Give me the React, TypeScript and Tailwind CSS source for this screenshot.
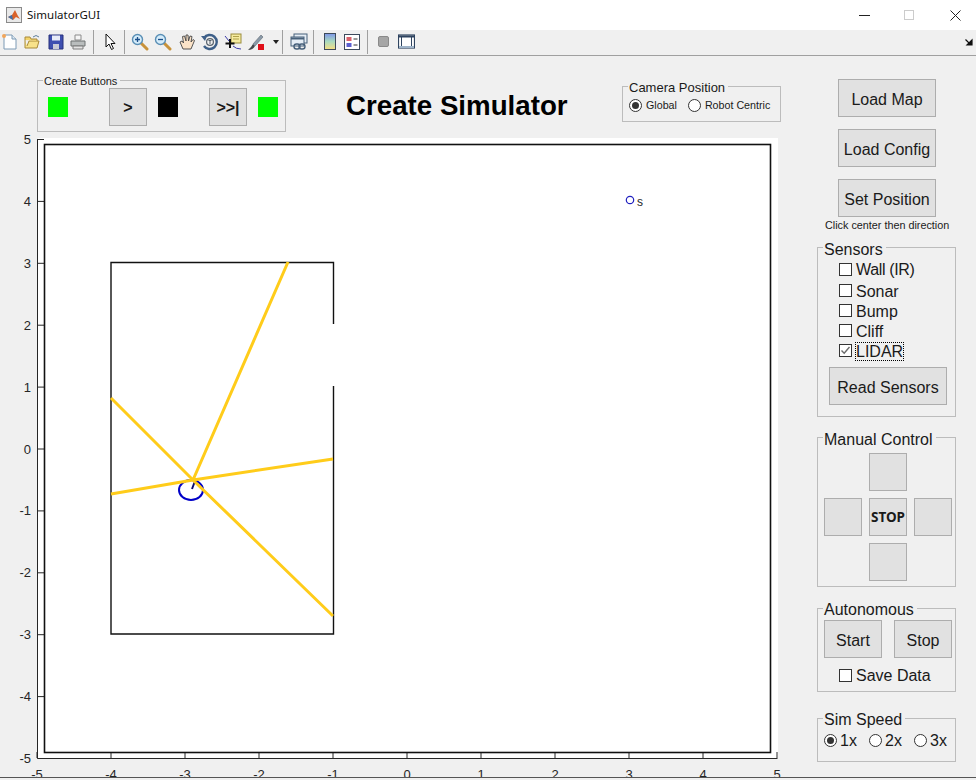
import React from "react";

const Btn = ({ className = "", size = "text-[16px]", children }: { className?: string; size?: string; children?: React.ReactNode }) => (
  <div className={`flex items-center justify-center bg-[#e1e1e1] border border-[#adadad] text-[#1a1a1a] ${size} ${className}`}>{children}</div>
);

const Panel = ({ title, titleClass = "text-[16px]", className = "", children }: { title: string; titleClass?: string; className?: string; children?: React.ReactNode }) => (
  <div className={`relative border border-[#bcbcbc] ${className}`}>
    <span className={`absolute left-[5px] bg-[#f0f0f0] pl-[1px] pr-[3px] leading-none text-[#1a1a1a] ${titleClass}`}>{title}</span>
    {children}
  </div>
);

const Check = ({ label, checked = false, focus = false, rowClass = "h-[20px]", textClass = "mt-[2px]" }: { label: string; checked?: boolean; focus?: boolean; rowClass?: string; textClass?: string }) => (
  <div className={`flex items-center text-[16px] text-[#1a1a1a] ${rowClass}`}>
    <div className="flex h-[13px] w-[13px] items-center justify-center border border-[#333333] bg-white">
      {checked && (
        <svg width="11" height="11" viewBox="0 0 11 11">
          <path d="M1.5 5.5 L4.2 8.2 L9.5 2" fill="none" stroke="#6b6b6b" strokeWidth="1.4" />
        </svg>
      )}
    </div>
    <span className={`ml-[3px] leading-[17px] ${textClass} ${focus ? "border border-dotted border-black" : "border border-transparent"}`}>{label}</span>
  </div>
);

const Radio = ({ on = false }: { on?: boolean }) => (
  <div className="flex h-[13px] w-[13px] shrink-0 items-center justify-center rounded-full border border-[#333333] bg-white">
    {on && <div className="h-[7px] w-[7px] rounded-full bg-[#333333]" />}
  </div>
);

const Sep = ({ ml }: { ml: string }) => <div className={`h-[24px] w-[1px] bg-[#a0a0a0] ${ml}`} />;

const I = ({ w = 18, ml, children }: { w?: number; ml: string; children: React.ReactNode }) => (
  <svg width={w} height="18" viewBox={`0 0 ${w} 18`} className={`shrink-0 ${ml}`}>{children}</svg>
);

const Lens = ({ sign }: { sign: "+" | "-" }) => (
  <>
    <path d="M10 10 L16 16" stroke="#c8923a" strokeWidth="3" strokeLinecap="round" />
    <circle cx="6.5" cy="6.5" r="5" fill="#d5ecfa" stroke="#5a8fb5" strokeWidth="1.4" />
    <path d={sign === "+" ? "M4 6.5 H9 M6.5 4 V9" : "M4 6.5 H9"} stroke="#1c4f8a" strokeWidth="1.3" />
  </>
);

const Toolbar = () => (
  <div className="flex h-[25px] items-center bg-[#f0f0f0] pb-[2px]">
    <I w={16} ml="ml-[1px]">
      <path d="M3 2 H11 L15 6 V16 H3 Z" fill="#ffffff" stroke="#7d9ab5" />
      <path d="M11 2 V6 H15" fill="#dfe9f2" stroke="#7d9ab5" />
      <circle cx="3" cy="3" r="2" fill="#f2a65a" />
    </I>
    <I w={16} ml="ml-[7px]">
      <path d="M1 7 V15 H13 L15 8 H5 L3 13" fill="#f8e28a" stroke="#a88a3a" />
      <path d="M1 7 V4 H6 L7 6 H13 V8" fill="#f3d36a" stroke="#a88a3a" />
      <path d="M9 4 Q12 1 15 4" fill="none" stroke="#5f7f9e" />
    </I>
    <I w={16} ml="ml-[8px]">
      <path d="M1 2 H15 V16 H1 Z" fill="#3e4fb0" stroke="#27307a" />
      <rect x="4" y="2.5" width="8" height="5" fill="#e8ecf8" />
      <rect x="5" y="11" width="6" height="5" fill="#c9cbd6" />
    </I>
    <I w={16} ml="ml-[6px]">
      <path d="M5 2 H11 V7 H5 Z" fill="#f5f5f5" stroke="#8b8b8b" />
      <path d="M1 8 H15 V13 H1 Z" fill="#b9bdbd" stroke="#6f7373" />
      <path d="M3 13 H13 V16 H3 Z" fill="#e3e3e3" stroke="#7d7d7d" />
    </I>
    <Sep ml="ml-[7px]" />
    <I w={14} ml="ml-[10px]">
      <path d="M2 1 V14 L5 11 L7.5 16.5 L9.5 15.5 L7 10.5 H11 Z" fill="#ffffff" stroke="#111111" strokeWidth="1" />
    </I>
    <Sep ml="ml-[6px]" />
    <I ml="ml-[6px]"><Lens sign="+" /></I>
    <I ml="ml-[5px]"><Lens sign="-" /></I>
    <I ml="ml-[6px]">
      <path d="M5 16 L2 9 L4 8 L5.5 10 L4.5 3.5 L6.5 3 L8 8 L8 2 L10 2 L10.5 8 L12 3 L14 3.5 L13 9 L15 6.5 L16.5 7.5 L13 16 Z" fill="#fbe3c8" stroke="#444444" strokeWidth="0.9" />
    </I>
    <I w={17} ml="ml-[5px]">
      <path d="M3 5 A7 7 0 1 1 3 13" fill="none" stroke="#3d5f88" strokeWidth="2.4" />
      <path d="M0 3 L6 3 L4 8 Z" fill="#3d5f88" />
      <circle cx="9" cy="9" r="3.4" fill="none" stroke="#55606b" strokeWidth="1.2" />
      <path d="M7.5 7.5 H10.5 M9 7.5 V11" stroke="#55606b" />
    </I>
    <I ml="ml-[6px]">
      <rect x="7" y="1" width="10" height="9" fill="#f5eb9f" stroke="#9a8c3c" />
      <path d="M9 3.5 H15 M9 6 H15" stroke="#b0a24c" />
      <path d="M6 6 V15 M1.5 10.5 H10.5" stroke="#111111" strokeWidth="2" />
      <path d="M1 3 L5 8 M9 13 Q12 16 17 16" fill="none" stroke="#3a3aa8" />
    </I>
    <I ml="ml-[5px]">
      <path d="M4 14 Q2 16 1 17 Q6 17 8 13 L6 11 Z" fill="#45494d" />
      <path d="M6 11 L14 2 L16 4 L8 13 Z" fill="#8b9aa8" stroke="#5b6670" strokeWidth="0.6" />
      <rect x="11" y="11" width="6" height="6" fill="#e0101a" />
    </I>
    <svg width="6" height="4" viewBox="0 0 6 4" className="ml-[8px] shrink-0"><path d="M0 0 H6 L3 4 Z" fill="#222222" /></svg>
    <Sep ml="ml-[3px]" />
    <I ml="ml-[7px]">
      <rect x="4" y="1" width="13" height="9" fill="#e5edf5" stroke="#47607a" />
      <rect x="1" y="4" width="13" height="9" fill="#e5edf5" stroke="#47607a" />
      <path d="M1 5.5 H14" stroke="#47607a" strokeWidth="2" />
      <rect x="4" y="11" width="6" height="5" rx="2.5" fill="none" stroke="#47607a" strokeWidth="1.4" />
      <rect x="9" y="11" width="6" height="5" rx="2.5" fill="none" stroke="#47607a" strokeWidth="1.4" />
    </I>
    <Sep ml="ml-[5px]" />
    <svg width="12" height="18" viewBox="0 0 12 18" className="ml-[10px] shrink-0">
      <defs>
        <linearGradient id="cb" x1="0" y1="0" x2="0" y2="1">
          <stop offset="0" stopColor="#7d95e8" />
          <stop offset="0.5" stopColor="#a9dbc0" />
          <stop offset="1" stopColor="#f7df82" />
        </linearGradient>
      </defs>
      <rect x="0.5" y="0.5" width="11" height="16" fill="url(#cb)" stroke="#3d4a5c" />
    </svg>
    <I w={16} ml="ml-[8px]">
      <rect x="0.5" y="1.5" width="15" height="15" fill="#ffffff" stroke="#3d4a5c" />
      <rect x="2.5" y="4" width="5" height="4" fill="#d9606a" />
      <rect x="2.5" y="10" width="5" height="4" fill="#5b5fd0" />
      <path d="M9.5 6 H13.5 M9.5 12 H13.5" stroke="#333333" />
    </I>
    <Sep ml="ml-[7px]" />
    <div className="ml-[10px] h-[11px] w-[11px] shrink-0 rounded-[2px] border border-[#8a8a8a] bg-[#a6a6a6]" />
    <I w={17} ml="ml-[9px]">
      <rect x="0.5" y="2" width="16" height="13" fill="#ffffff" stroke="#2f4460" strokeWidth="1.2" />
      <rect x="1" y="2.5" width="15" height="2" fill="#2f4460" />
      <rect x="1" y="13" width="15" height="2" fill="#9fb4c9" />
      <path d="M3.5 4 V13 M13.5 4 V13" stroke="#2f4460" />
    </I>
    <svg width="8" height="8" viewBox="0 0 8 8" className="ml-[550px] shrink-0">
      <path d="M0.5 1.5 L5 6 M7 2 V7 H2 Z" stroke="#111111" strokeWidth="1.2" fill="#111111" />
    </svg>
  </div>
);

const xTicks = [-5, -4, -3, -2, -1, 0, 1, 2, 3, 4, 5];
const xAt = (v: number) => 407 + 74 * v;
const yAt = (v: number) => 449 - 61.9 * v;

const Plot = () => (
  <svg width="800" height="645" viewBox="0 132 800 645" className="block shrink-0">
    <rect x="38" y="138" width="740" height="620" fill="#ffffff" />
    <path d="M37.5 139 V758.5 H777.5" fill="none" stroke="#262626" strokeWidth="1" />
    {xTicks.map((v) => (
      <g key={v}>
        <path d={`M${xAt(v)} 758 V752`} stroke="#262626" />
        <text x={xAt(v)} y="779" textAnchor="middle" fontSize="13" fill="#262626">{v}</text>
        <path d={`M37.5 ${yAt(v)} H44`} stroke="#262626" />
        <text x="31" y={yAt(v) + 4.5} textAnchor="end" fontSize="13" fill="#262626">{v}</text>
      </g>
    ))}
    <rect x="44.5" y="144.5" width="726" height="608" fill="none" stroke="#111111" strokeWidth="1.6" />
    <path d="M333.5 324 V262.5 H111 V634 H333.5 V386" fill="none" stroke="#111111" strokeWidth="1.4" />
    <ellipse cx="191" cy="490" rx="12" ry="10" fill="none" stroke="#0000c8" strokeWidth="2" />
    <path d="M192 489 L195 481" stroke="#0a0a6a" strokeWidth="2" />
    <path d="M193 480 L288 262 M193 480 L111 398 M193 480 L111 494 M193 480 L333 459 M193 480 L333 616" fill="none" stroke="#ffcc1a" strokeWidth="3" />
    <circle cx="630" cy="200" r="3.7" fill="none" stroke="#2020c0" strokeWidth="1.2" />
    <text x="637" y="206" fontSize="12" fill="#262626">s</text>
  </svg>
);

export default function App() {
  return (
    <div className="flex h-[780px] w-[976px] flex-col overflow-hidden bg-[#f0f0f0] font-['Liberation_Sans',Arial,sans-serif]">
      <div className="flex h-[30px] shrink-0 items-center bg-white">
        <svg width="16" height="16" viewBox="0 0 16 16" className="ml-[6px]">
          <rect x="0.5" y="0.5" width="15" height="15" fill="#e9e9e9" stroke="#8a8a8a" />
          <path d="M2 10 L6 8 L9 3 L12 9 L14 12 L10 10 L7 13 Z" fill="#d9622a" />
          <path d="M2 10 L6 8 L7 13 Z" fill="#3f6fa8" />
        </svg>
        <span className="ml-[5px] font-['Noto_Sans',sans-serif] text-[11.5px] text-[#111111]">SimulatorGUI</span>
        <div className="ml-auto flex items-center">
          <div className="h-[1px] w-[11px] bg-[#222222]" />
          <div className="ml-[34px] h-[10px] w-[10px] border border-[#cccccc]" />
          <svg width="11" height="11" viewBox="0 0 11 11" className="ml-[36px] mr-[15px]">
            <path d="M0.5 0.5 L10.5 10.5 M10.5 0.5 L0.5 10.5" stroke="#222222" strokeWidth="1" />
          </svg>
        </div>
      </div>
      <Toolbar />
      <div className="h-[1px] shrink-0 bg-[#a0a0a0]" />
      <div className="flex h-[721px] shrink-0">
        <div className="flex w-[800px] flex-col">
          <div className="ml-[37px] mt-[24px] flex h-[52px] shrink-0 items-start">
            <Panel title="Create Buttons" titleClass="text-[11px] top-[-5px]" className="flex h-[52px] w-[249px] items-center pt-[2px]">
              <div className="ml-[10px] h-[20px] w-[20px] bg-[#00ff00]" />
              <Btn className="ml-[41px] h-[38px] w-[38px] pt-[2px] font-bold">&gt;</Btn>
              <div className="ml-[11px] h-[20px] w-[20px] bg-black" />
              <Btn className="ml-[31px] h-[38px] w-[38px] pt-[2px] font-bold">&gt;&gt;|</Btn>
              <div className="ml-[11px] h-[20px] w-[20px] bg-[#00ff00]" />
            </Panel>
            <div className="ml-[60px] mt-[9px] w-[222px] whitespace-nowrap text-[27.7px] font-bold leading-[34px] text-black">Create Simulator</div>
            <Panel title="Camera Position" titleClass="text-[13px] top-[-6px]" className="ml-[54px] mt-[6px] flex h-[36px] w-[159px] items-center pl-[6px] pt-[3px] text-[10.7px] text-[#1a1a1a]">
              <Radio on />
              <span className="ml-[4px]">Global</span>
              <div className="ml-[11px]"><Radio /></div>
              <span className="ml-[4px]">Robot Centric</span>
            </Panel>
          </div>
          <Plot />
        </div>
        <div className="flex w-[176px] flex-col">
          <Btn className="ml-[38px] mt-[23px] h-[38px] w-[98px] pt-[4px]">Load Map</Btn>
          <Btn className="ml-[38px] mt-[12px] h-[38px] w-[98px] pt-[4px]">Load Config</Btn>
          <Btn className="ml-[38px] mt-[12px] h-[38px] w-[98px] pt-[4px]">Set Position</Btn>
          <div className="ml-[25px] mt-[2px] h-[12px] whitespace-nowrap text-[10.8px] leading-[12px] text-[#1a1a1a]">Click center then direction</div>
          <Panel title="Sensors" titleClass="top-[-6px]" className="ml-[17px] mt-[16px] h-[170px] w-[139px] pt-[11px]">
            <div className="pl-[21px]">
              <Check label="Wall (IR)" rowClass="h-[21px]" textClass="tracking-[-0.35px]" />
              <Check label="Sonar" />
              <Check label="Bump" />
              <Check label="Cliff" />
              <Check label="LIDAR" checked focus />
            </div>
            <Btn className="ml-[11px] mt-[7px] h-[38px] w-[118px] pt-[4px]">Read Sensors</Btn>
          </Panel>
          <Panel title="Manual Control" titleClass="top-[-6px]" className="ml-[17px] mt-[20px] h-[150px] w-[139px] pl-[6px] pt-[15px]">
            <div className="grid grid-cols-[38px_38px_38px] grid-rows-[38px_38px_38px] gap-[7px]">
              <div />
              <Btn />
              <div />
              <Btn />
              <Btn size="text-[13.5px]" className="whitespace-nowrap font-['Noto_Sans',sans-serif] font-bold">STOP</Btn>
              <Btn />
              <div />
              <Btn />
              <div />
            </div>
          </Panel>
          <Panel title="Autonomous" titleClass="top-[-7px]" className="ml-[17px] mt-[21px] h-[84px] w-[139px] pl-[6px] pr-[3px] pt-[11px]">
            <div className="flex justify-between">
              <Btn className="h-[38px] w-[58px] pt-[4px]">Start</Btn>
              <Btn className="h-[38px] w-[58px] pt-[4px]">Stop</Btn>
            </div>
            <div className="ml-[15px] mt-[7px]"><Check label="Save Data" textClass="" /></div>
          </Panel>
          <Panel title="Sim Speed" titleClass="top-[-7px]" className="ml-[17px] mt-[26px] flex h-[44px] w-[139px] items-center pl-[6px] pt-[1px] text-[16px] text-[#1a1a1a]">
            <Radio on />
            <span className="ml-[3px] w-[29px]">1x</span>
            <Radio />
            <span className="ml-[3px] w-[29px]">2x</span>
            <Radio />
            <span className="ml-[3px]">3x</span>
          </Panel>
        </div>
      </div>
      <div className="h-[1px] shrink-0 bg-[#555555]" />
    </div>
  );
}
